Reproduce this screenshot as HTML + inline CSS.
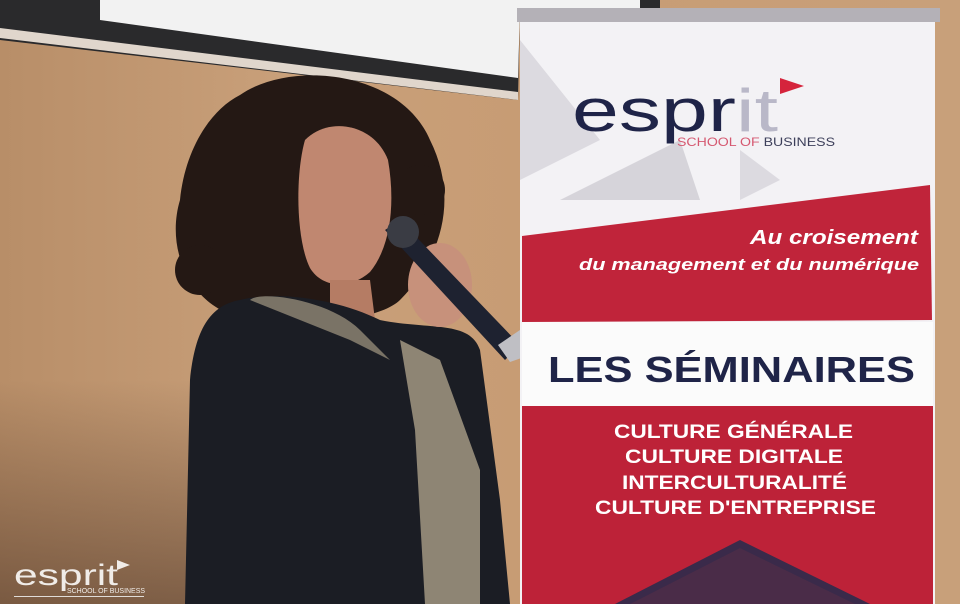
<!DOCTYPE html>
<html><head><meta charset="utf-8"><style>
body{margin:0;width:960px;height:604px;overflow:hidden;position:relative;font-family:"Liberation Sans",sans-serif;background:#c3976f}
.a{position:absolute}
</style></head><body>
<div class="a" style="left:0;top:0;width:960px;height:604px;background:linear-gradient(90deg,#b88e68 0%,#c9a07a 30%,#c79c74 55%,#c8a07a 100%)"></div>
<div class="a" style="left:0;top:380px;width:300px;height:224px;background:linear-gradient(180deg,rgba(90,60,40,0) 0%,rgba(80,55,40,.6) 100%)"></div>
<svg class="a" style="left:0;top:0" width="960" height="604">
<polygon points="0,0 660,0 660,8 520,8 518,100 0,40" fill="#2a2a2c"/>
<polygon points="100,0 640,0 640,8 520,10 518,78 100,20" fill="#f2f2f2"/>
<polygon points="0,28 518,92 518,100 0,38" fill="#e0d6cc"/>
<!-- hair -->
<path d="M240,95 C290,60 400,70 430,140 C460,200 440,260 400,300 C380,320 300,330 250,320 C190,310 165,250 180,200 C185,150 210,110 240,95Z" fill="#241814"/>
<circle cx="200" cy="270" r="25" fill="#241814"/>
<circle cx="420" cy="190" r="25" fill="#241814"/>
<!-- face -->
<path d="M305,140 C330,115 375,125 388,160 C395,200 392,245 370,272 C350,290 322,288 310,268 C296,240 295,175 305,140Z" fill="#c08770"/>
<path d="M330,280 L370,280 L375,320 L330,325Z" fill="#b57c64"/>
<!-- jacket -->
<path d="M240,300 C280,290 340,300 380,320 C430,330 470,320 480,350 L500,500 L510,604 L185,604 L190,380 C195,330 210,305 240,300Z" fill="#1b1d24"/>
<path d="M400,340 L440,360 L480,470 L480,604 L425,604 L415,430Z" fill="#8e8574"/>
<path d="M250,300 C260,290 330,300 360,330 L390,360 L350,340Z" fill="#7a7366"/>
<!-- hand & mic -->
<ellipse cx="440" cy="285" rx="32" ry="42" fill="#c7917b"/>
<path d="M385,230 L400,220 L520,345 L505,360Z" fill="#1e2230"/>
<circle cx="403" cy="232" r="16" fill="#3a3c44"/>
<path d="M498,345 L520,330 L530,355 L510,362Z" fill="#bfbfc4"/>
<!-- banner -->
<rect x="517" y="8" width="423" height="14" fill="#b4b1b7"/>
<rect x="520" y="22" width="415" height="582" fill="#f3f2f5"/>
<polygon points="520,40 600,140 520,180" fill="#dcdae0"/>
<polygon points="560,200 680,140 700,200" fill="#d6d4da"/>
<polygon points="740,150 780,180 740,200" fill="#dcdae0"/>
<polygon points="522,236 930,185 932,320 522,322" fill="#c0243a"/>
<rect x="522" y="322" width="411" height="84" fill="#fbfbfb"/>
<rect x="522" y="406" width="411" height="198" fill="#bd2238"/>
<polygon points="615,604 740,540 870,604" fill="#3a2a4a"/>
<polygon points="630,604 740,548 855,604" fill="#4a2c48"/>
<polygon points="780,78 804,86 780,94" fill="#d5243c"/>
<text x="572" y="131" font-size="60" fill="#1f2448" textLength="206" lengthAdjust="spacingAndGlyphs">espr<tspan fill="#b9b8c8">it</tspan></text>
<text x="677" y="146" font-size="12" fill="#d55870" textLength="158" lengthAdjust="spacingAndGlyphs">SCHOOL OF <tspan fill="#3c3f5a">BUSINESS</tspan></text>
<g font-weight="bold" font-style="italic" fill="#fff">
<text x="750" y="244" font-size="20" textLength="168" lengthAdjust="spacingAndGlyphs">Au croisement</text>
<text x="579" y="270" font-size="17" textLength="340" lengthAdjust="spacingAndGlyphs">du management et du numérique</text>
</g>
<text x="548" y="382" font-size="36" font-weight="bold" fill="#1f2448" textLength="367" lengthAdjust="spacingAndGlyphs">LES SÉMINAIRES</text>
<g font-weight="bold" fill="#fff" font-size="19">
<text x="614" y="438" textLength="239" lengthAdjust="spacingAndGlyphs">CULTURE GÉNÉRALE</text>
<text x="625" y="463" textLength="218" lengthAdjust="spacingAndGlyphs">CULTURE DIGITALE</text>
<text x="622" y="489" textLength="225" lengthAdjust="spacingAndGlyphs">INTERCULTURALITÉ</text>
<text x="595" y="514" textLength="281" lengthAdjust="spacingAndGlyphs">CULTURE D'ENTREPRISE</text>
</g>
<text x="14" y="585" font-size="30" fill="#f0ece8" textLength="104" lengthAdjust="spacingAndGlyphs">esprit</text>
<polygon points="117,560 130,565 117,570" fill="#f0ece8"/>
<text x="67" y="593" font-size="7" fill="#f0ece8" textLength="78" lengthAdjust="spacingAndGlyphs">SCHOOL OF BUSINESS</text>
<rect x="14" y="596" width="130" height="1" fill="#e0dcd8"/>
</svg>
</body></html>
